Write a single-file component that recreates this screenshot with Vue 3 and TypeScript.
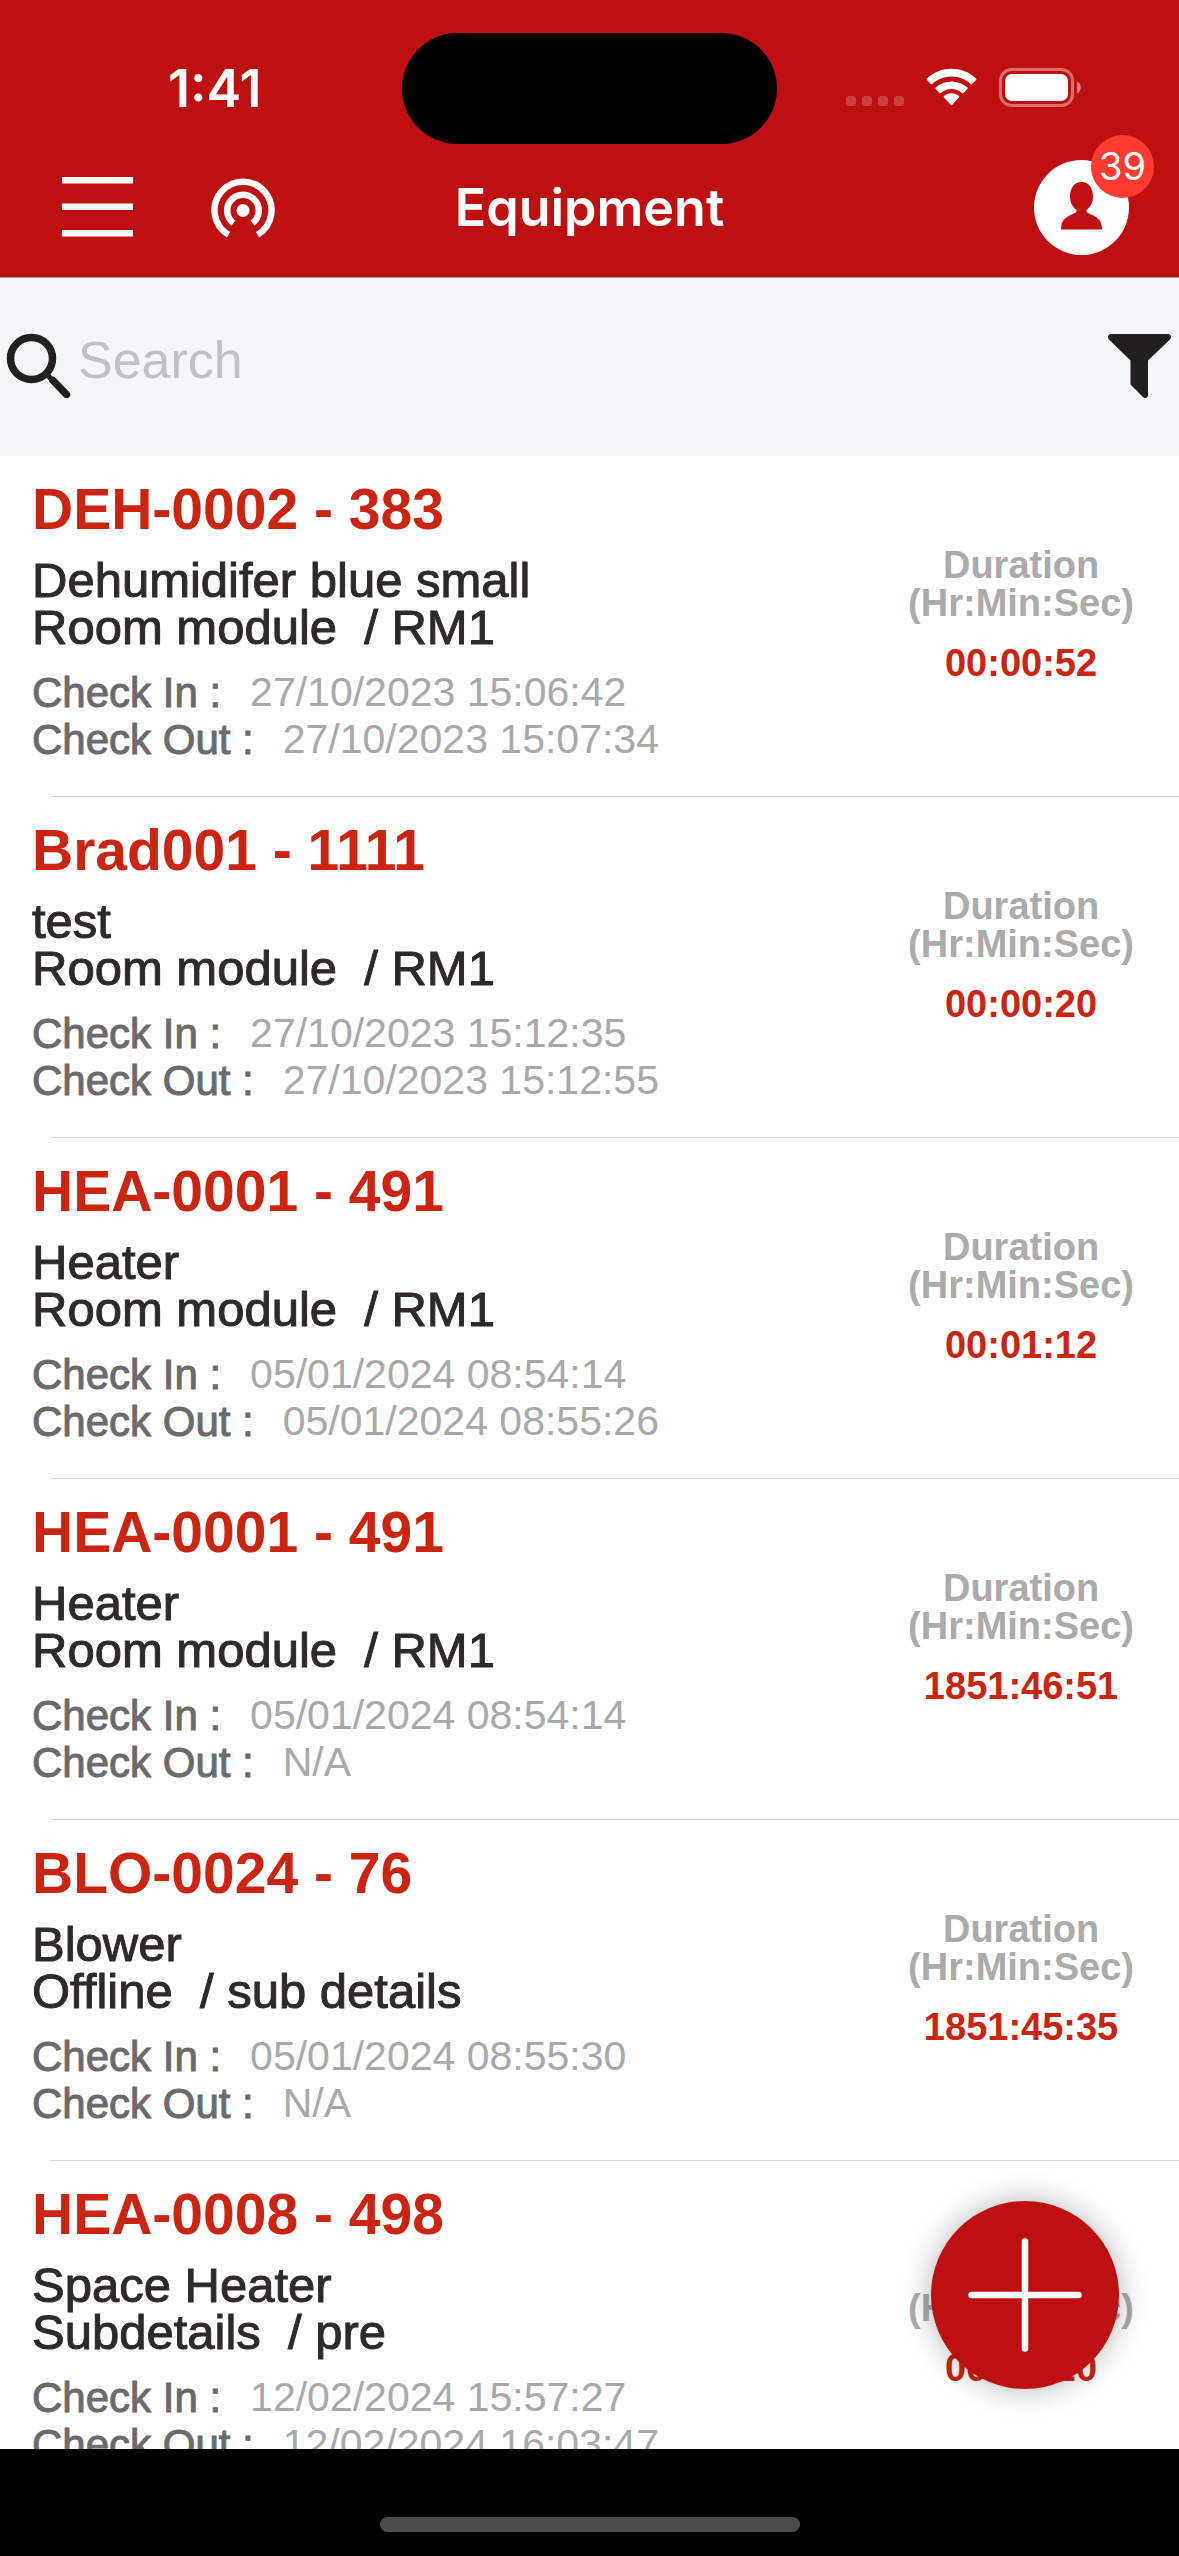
<script setup lang="ts">
import { ref } from 'vue'

interface Equipment {
  title: string
  name: string
  location: string
  checkIn: string
  checkOut: string
  duration: string
}

const query = ref('')
const notifications = ref(39)

const items = ref<Equipment[]>([
  { title: 'DEH-0002 - 383', name: 'Dehumidifer blue small', location: 'Room module  / RM1', checkIn: '27/10/2023 15:06:42', checkOut: '27/10/2023 15:07:34', duration: '00:00:52' },
  { title: 'Brad001 - 1111', name: 'test', location: 'Room module  / RM1', checkIn: '27/10/2023 15:12:35', checkOut: '27/10/2023 15:12:55', duration: '00:00:20' },
  { title: 'HEA-0001 - 491', name: 'Heater', location: 'Room module  / RM1', checkIn: '05/01/2024 08:54:14', checkOut: '05/01/2024 08:55:26', duration: '00:01:12' },
  { title: 'HEA-0001 - 491', name: 'Heater', location: 'Room module  / RM1', checkIn: '05/01/2024 08:54:14', checkOut: 'N/A', duration: '1851:46:51' },
  { title: 'BLO-0024 - 76', name: 'Blower', location: 'Offline  / sub details', checkIn: '05/01/2024 08:55:30', checkOut: 'N/A', duration: '1851:45:35' },
  { title: 'HEA-0008 - 498', name: 'Space Heater', location: 'Subdetails  / pre', checkIn: '12/02/2024 15:57:27', checkOut: '12/02/2024 16:03:47', duration: '00:06:20' },
])
</script>

<template>
  <div class="screen">
    <header class="header">
      <div class="status">
        <span class="clock">1:41</span>
        <div class="island"></div>
        <div class="indicators">
          <svg width="58" height="42" viewBox="0 0 58 42" fill="#fff" fill-opacity="0.2" aria-hidden="true">
            <rect x="0" y="28" width="10" height="10" rx="3" />
            <rect x="16" y="28" width="10" height="10" rx="3" />
            <rect x="32" y="28" width="10" height="10" rx="3" />
            <rect x="48" y="28" width="10" height="10" rx="3" />
          </svg>
          <svg width="51" height="42" viewBox="0 -0.3 17 14" fill="#fff" aria-hidden="true">
            <path d="M8.5 2.5c2.4 0 4.7.9 6.4 2.5.1.1.3.1.5 0l1.3-1.3c.1-.1.1-.4 0-.5C12.1-1.1 4.9-1.1.3 3.2c-.1.1-.1.4 0 .5L1.6 5c.1.1.3.1.5 0C3.8 3.4 6.1 2.5 8.5 2.5z" />
            <path d="M8.5 6.7c1.3 0 2.6.5 3.5 1.3.1.1.3.1.5 0l1.3-1.3c.1-.1.1-.4 0-.5-3-2.7-7.6-2.7-10.6 0-.1.1-.1.4 0 .5l1.3 1.3c.1.1.4.1.5 0 1-.8 2.2-1.3 3.5-1.3z" />
            <path d="M11 9.5c.1-.1.1-.4 0-.5-1.4-1.2-3.6-1.2-5 0-.1.1-.1.4 0 .5l2.3 2.5c.1.1.3.1.4 0z" />
          </svg>
          <svg width="82" height="42" viewBox="0 0 82 42" aria-hidden="true">
            <rect x="1.5" y="1.5" width="72" height="36" rx="11" fill="none" stroke="#fff" stroke-opacity="0.4" stroke-width="3" />
            <rect x="6" y="6" width="63" height="27" rx="7" fill="#fff" />
            <path d="M78 13.5c5 2 5 10 0 12z" fill="#fff" fill-opacity="0.5" />
          </svg>
        </div>
      </div>
      <nav class="nav">
        <div class="nav-left">
          <button class="icon-button" type="button" aria-label="Menu">
            <svg width="71" height="64" viewBox="0 0 71 64" fill="#fff">
              <rect y="1" width="71" height="6.5" />
              <rect y="27.5" width="71" height="6.5" />
              <rect y="54" width="71" height="6.5" />
            </svg>
          </button>
          <button class="icon-button" type="button" aria-label="Broadcast">
            <svg width="64" height="64" viewBox="0 0 64 64" fill="none" stroke="#fff" stroke-width="6.5">
              <path d="M17.5 58.8A28.5 28.5 0 1 1 46.5 58.8" />
              <path d="M22.5 47.2A15.8 15.8 0 1 1 41.5 47.2" />
              <circle cx="32" cy="34.5" r="6.5" fill="#fff" stroke="none" />
            </svg>
          </button>
        </div>
        <h1 class="nav-title">Equipment</h1>
        <button class="avatar" type="button" aria-label="Profile">
          <svg width="95" height="95" viewBox="0 0 95 95" fill="#be1010">
            <path d="M47.5 22C54.5 22 59 28 59 36.5 59 43 56 47.5 52.5 50c-.6 1.8.5 2.6 2.5 3.6C62 56.8 68 59 68 69.5H27C27 59 33 56.8 40 53.6c2-1 3.1-1.8 2.5-3.6C39 47.5 36 43 36 36.5 36 28 40.5 22 47.5 22z" />
          </svg>
          <span class="badge">{{ notifications }}</span>
        </button>
      </nav>
    </header>

    <form class="search" role="search" @submit.prevent>
      <label class="search-icon" for="search" aria-label="Search">
        <svg width="72" height="76" viewBox="0 0 72 76" fill="none" stroke="#231f20">
          <circle cx="31.5" cy="36.5" r="21" stroke-width="7.5" />
          <path d="M47.5 53L52 58" stroke-width="5" />
          <path d="M53 58.5L66.5 72.5" stroke-width="7.5" stroke-linecap="round" />
        </svg>
      </label>
      <input id="search" v-model="query" class="search-input" type="text" placeholder="Search" />
      <button class="icon-button" type="button" aria-label="Filter">
        <svg width="63" height="76" viewBox="0 0 63 76" fill="#231f20">
          <path d="M3 12H60C63 12 64 15 62 17.5L40 38.5V73C40 76 37 77 35 75L22.5 62.5V38.5L1 17.5C-1 15 0 12 3 12z" />
        </svg>
      </button>
    </form>

    <main class="content">
      <ul class="list">
        <li v-for="(item, i) in items" :key="i" class="row">
          <div class="info">
            <h2 class="title">{{ item.title }}</h2>
            <p class="detail">{{ item.name }}</p>
            <p class="detail">{{ item.location }}</p>
            <dl class="times">
              <div class="time-line">
                <dt>Check In :</dt>
                <dd>{{ item.checkIn }}</dd>
              </div>
              <div class="time-line">
                <dt>Check Out :</dt>
                <dd>{{ item.checkOut }}</dd>
              </div>
            </dl>
          </div>
          <div class="duration">
            <span>Duration</span>
            <span>(Hr:Min:Sec)</span>
            <strong>{{ item.duration }}</strong>
          </div>
        </li>
      </ul>
      <button class="fab" type="button" aria-label="Add equipment">
        <svg width="114" height="114" viewBox="0 0 114 114" stroke="#fff" stroke-width="6.5" stroke-linecap="round">
          <path d="M57 3.5V110.5M3.5 57H110.5" />
        </svg>
      </button>
    </main>

    <footer class="home">
      <div class="home-bar"></div>
    </footer>
  </div>
</template>

<style>
body {
  margin: 0;
  background: #000;
}
</style>

<style scoped>
.screen {
  display: flex;
  flex-direction: column;
  height: 100vh;
  overflow: hidden;
  background: #fff;
  font-family: "Liberation Sans", Arial, sans-serif;
}

button {
  padding: 0;
  border: 0;
  background: none;
}

svg {
  display: block;
}

h1,
h2,
p,
dl,
dd,
ul {
  margin: 0;
  padding: 0;
}

.header {
  flex: none;
  border-bottom: 1px solid #aaa4a6;
  background: #be1010;
  color: #fff;
  font-family: Inter, sans-serif;
}

.status {
  display: grid;
  grid-template-columns: 1fr 375px 1fr;
  align-items: center;
  padding-top: 33px;
}

.clock {
  padding-left: 168px;
  font-size: 52px;
  font-weight: 600;
  line-height: 64px;
}

.island {
  height: 111px;
  border-radius: 56px;
  background: #000;
}

.indicators {
  display: flex;
  justify-content: flex-end;
  gap: 22px;
  padding-right: 98px;
}

.nav {
  display: grid;
  grid-template-columns: 1fr auto 1fr;
  align-items: center;
  padding: 16px 50px 22px;
}

.nav-left {
  display: flex;
  align-items: center;
  gap: 78px;
  padding-left: 12px;
}

.nav-title {
  font-size: 52px;
  font-weight: 600;
  line-height: 64px;
}

.avatar {
  position: relative;
  justify-self: end;
  width: 95px;
  height: 95px;
  border-radius: 50%;
  background: #fff;
}

.badge {
  position: absolute;
  top: -25px;
  right: -25px;
  width: 63px;
  height: 63px;
  border-radius: 50%;
  background: #ff3b30;
  color: #fff;
  font-family: Inter, sans-serif;
  font-size: 38px;
  line-height: 63px;
  text-align: center;
}

.search {
  flex: none;
  display: flex;
  align-items: center;
  height: 164px;
  padding: 0 8px 14px 0;
  background: #f4f6f8;
}

.search-input {
  flex: 1;
  min-width: 0;
  padding: 0 6px;
  border: 0;
  outline: 0;
  background: none;
  color: #231f20;
  font-family: inherit;
  font-size: 52px;
  line-height: 64px;
}

.search-input::placeholder {
  color: #c0c1c3;
  opacity: 1;
}

.content {
  position: relative;
  flex: 1;
  min-height: 0;
  overflow: hidden;
}

.list {
  list-style: none;
}

.row {
  position: relative;
  display: flex;
  justify-content: space-between;
  padding: 21px 45px 34px 32px;
}

.row::after {
  content: "";
  position: absolute;
  right: 0;
  bottom: 0;
  left: 50px;
  height: 1px;
  background: #d9d9db;
}

.title {
  margin-bottom: 16px;
  color: #cb2411;
  font-size: 57px;
  font-weight: 700;
  line-height: 64px;
}

.detail {
  color: #2e2a2b;
  font-size: 49px;
  line-height: 47px;
  white-space: pre;
  -webkit-text-stroke: 1px currentColor;
}

.times {
  margin-top: 18px;
}

.time-line {
  display: flex;
  gap: 29px;
  line-height: 47px;
}

.time-line dt {
  color: #6b6a6c;
  font-size: 42px;
  -webkit-text-stroke: 1px currentColor;
}

.time-line dd {
  color: #a9a9a9;
  font-size: 41px;
}

.duration {
  display: flex;
  flex-direction: column;
  align-items: center;
  padding-top: 69px;
  color: #ababab;
  font-size: 38px;
  font-weight: 700;
  line-height: 38px;
}

.duration strong {
  margin-top: 22px;
  color: #cb2411;
}

.fab {
  position: absolute;
  right: 60px;
  bottom: 60px;
  display: flex;
  align-items: center;
  justify-content: center;
  width: 188px;
  height: 188px;
  border-radius: 50%;
  background: #be1010;
  box-shadow: 0 0 30px rgba(0, 0, 0, 0.3);
}

.home {
  flex: none;
  display: flex;
  justify-content: center;
  padding: 68px 0 24px;
  background: #000;
}

.home-bar {
  width: 420px;
  height: 15px;
  border-radius: 8px;
  background: #4b4b4b;
}
</style>
